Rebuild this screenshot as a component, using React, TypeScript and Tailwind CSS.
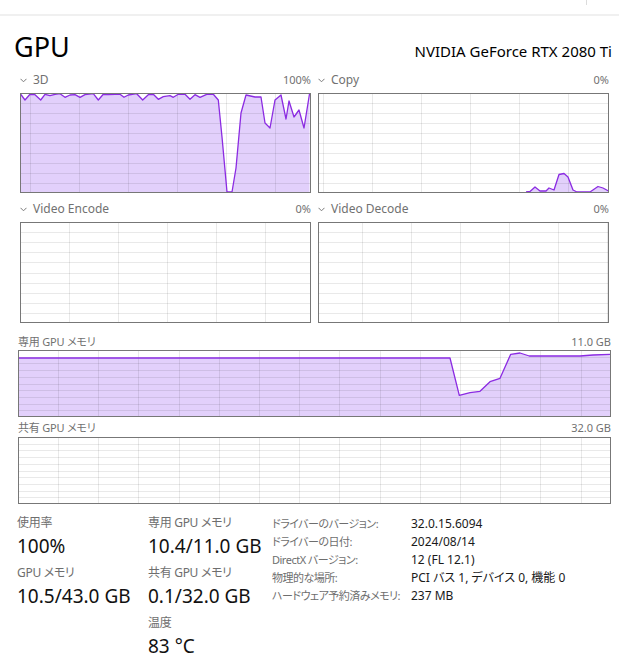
import React from "react";

type Pt = [number, number];

const GRID = "rgba(0,0,0,0.085)";
const LINE = "#8b2be2";
const FILL = "#e2d0fb";

const Chevron = () => (
  <svg width="7" height="5" viewBox="0 0 7 5" className="mr-[6px]">
    <path d="M0.5 0.8 L3.5 3.8 L6.5 0.8" fill="none" stroke="#7a7a7a" strokeWidth="1" />
  </svg>
);

const Graph = ({
  w,
  h,
  ox,
  oy,
  vStart,
  vStep,
  rows = 10,
  points = [],
}: {
  w: number;
  h: number;
  ox: number;
  oy: number;
  vStart: number;
  vStep: number;
  rows?: number;
  points?: Pt[];
}) => {
  const pts = points.map(([x, y]) => [x - ox, y - oy] as Pt);
  const verts: number[] = [];
  for (let x = vStart; x < w - 1; x += vStep) verts.push(Math.round(x) + 0.5);
  const hors: number[] = [];
  for (let k = 1; k < rows; k++) hors.push(Math.round((h * k) / rows) + 0.5);
  const line = pts.map((p) => p.join(",")).join(" ");
  const poly =
    pts.length > 0
      ? `${line} ${pts[pts.length - 1][0]},${h} ${pts[0][0]},${h}`
      : "";
  return (
    <svg width={w} height={h} className="block">
      <rect x="0" y="0" width={w} height={h} fill="#ffffff" />
      {pts.length > 0 && <polygon points={poly} fill={FILL} />}
      {verts.map((x) => (
        <line key={"v" + x} x1={x} y1={0} x2={x} y2={h} stroke={GRID} strokeWidth="1" />
      ))}
      {hors.map((y) => (
        <line key={"h" + y} x1={0} y1={y} x2={w} y2={y} stroke={GRID} strokeWidth="1" />
      ))}
      {pts.length > 0 && (
        <polyline points={line} fill="none" stroke={LINE} strokeWidth="1.3" strokeLinejoin="round" />
      )}
      <rect x="0.5" y="0.5" width={w - 1} height={h - 1} fill="none" stroke="#777777" strokeWidth="1" />
    </svg>
  );
};

const d3: Pt[] = [
  [20.3, 93.7], [25, 100], [30, 94.3], [35, 94.7], [40.7, 100], [45, 94.3], [50, 95.7], [55, 94.3],
  [60, 93.7], [65, 97.3], [70, 95], [75, 94.7], [80, 97.3], [85, 94.7], [93.3, 93.7], [98.3, 100],
  [103.3, 94.3], [108.3, 94.7], [115, 94.3], [120, 94.3], [124, 97.3], [128.3, 95], [136.7, 93.7],
  [142.7, 100], [148.3, 94.7], [153.3, 94.3], [158.3, 99.3], [163.3, 96.7], [170, 95.7], [173.3, 97.3],
  [178.3, 94.3], [185, 94.3], [190, 99.3], [195, 94.7], [200, 97.3], [206.7, 94.3], [213.3, 94.3],
  [218.3, 100], [222, 137], [227, 192], [232, 192], [236, 168], [241, 113], [246, 95], [255, 97],
  [261, 97], [265, 123], [270, 128], [275, 100], [281, 95], [286, 119], [289, 101], [294, 117],
  [299, 110], [304, 128], [309.5, 94],
];

const copy: Pt[] = [
  [526, 192], [530, 191.5], [535, 187], [540, 191], [546, 191], [549, 188], [554, 190], [559, 174.5],
  [564, 173.5], [568, 177], [573, 190], [577, 192], [590, 192], [598, 186.5], [603, 188], [608.5, 191],
];

const dedicated: Pt[] = [
  [18.5, 357], [450, 357], [459.3, 394.3], [470, 391.7], [480, 390.3], [490, 380.7], [500, 377.3],
  [510.7, 353.3], [520, 352], [529.3, 355], [580, 355], [593, 354], [610, 353.3],
];

const Label = ({ name, value, chevron = true }: { name: string; value: string; chevron?: boolean }) => (
  <div className="flex items-center justify-between h-[16px] leading-[16px] text-[#717171]">
    <div className="flex items-center">
      {chevron && <Chevron />}
      <span className={chevron ? "text-[12px]" : "text-[11px] tracking-[-0.2px]"}>{name}</span>
    </div>
    <span className="text-[11px]">{value}</span>
  </div>
);

const Stat = ({ label, value }: { label: string; value: string }) => (
  <div className="h-[50px]">
    <div className="text-[12px] leading-[16px] text-[#6e6e6e] tracking-[-0.3px]">{label}</div>
    <div className="text-[19px] leading-[26px] text-[#111111] mt-[2px]">{value}</div>
  </div>
);

const info: [string, string][] = [
  ["ドライバーのバージョン:", "32.0.15.6094"],
  ["ドライバーの日付:", "2024/08/14"],
  ["DirectX バージョン:", "12 (FL 12.1)"],
  ["物理的な場所:", "PCI バス 1, デバイス 0, 機能 0"],
  ["ハードウェア予約済みメモリ:", "237 MB"],
];

export default function App() {
  return (
    <div className="w-[619px] h-[661px] bg-white overflow-hidden font-['Noto_Sans','Noto_Sans_CJK_JP',sans-serif] [font-feature-settings:'palt']">
      <div className="h-[16px] border-b-2 border-[#f0f0f0] flex justify-end">
        <div className="w-px h-[5px] bg-[#dcdcdc] mr-[32px]" />
      </div>

      <div className="flex items-baseline justify-between pl-[14px] pr-[7px] mt-[14px]">
        <span className="text-[27px] leading-[34px] text-black">GPU</span>
        <span className="text-[15px] leading-[20px] text-black">NVIDIA GeForce RTX 2080 Ti</span>
      </div>

      <div className="pl-[20px] mt-[8px]">
        <div className="grid grid-cols-[291px_291px] gap-x-[7px]">
          <div>
            <Label name="3D" value="100%" />
            <div className="mt-[5px]">
              <Graph w={291} h={100} ox={20} oy={93} vStart={10} vStep={49} points={d3} />
            </div>
          </div>
          <div>
            <Label name="Copy" value="0%" />
            <div className="mt-[5px]">
              <Graph w={291} h={100} ox={318} oy={93} vStart={5} vStep={49} points={copy} />
            </div>
          </div>
          <div className="mt-[8px]">
            <Label name="Video Encode" value="0%" />
            <div className="mt-[5px]">
              <Graph w={291} h={101} ox={20} oy={221} vStart={49} vStep={49} />
            </div>
          </div>
          <div className="mt-[8px]">
            <Label name="Video Decode" value="0%" />
            <div className="mt-[5px]">
              <Graph w={291} h={101} ox={318} oy={221} vStart={44} vStep={49} />
            </div>
          </div>
        </div>
      </div>

      <div className="pl-[18px] w-[611px] mt-[11px]">
        <Label name="専用 GPU メモリ" value="11.0 GB" chevron={false} />
        <Graph w={593} h={67} ox={18} oy={349} vStart={40} vStep={40.2} points={dedicated} />
        <div className="mt-[3px]">
          <Label name="共有 GPU メモリ" value="32.0 GB" chevron={false} />
        </div>
        <div className="mt-[1px]">
          <Graph w={593} h={67} ox={18} oy={436} vStart={40} vStep={40.2} />
        </div>
      </div>

      <div className="flex pl-[17px] mt-[11px]">
        <div className="w-[131px]">
          <Stat label="使用率" value="100%" />
          <Stat label="GPU メモリ" value="10.5/43.0 GB" />
        </div>
        <div className="w-[124px]">
          <Stat label="専用 GPU メモリ" value="10.4/11.0 GB" />
          <Stat label="共有 GPU メモリ" value="0.1/32.0 GB" />
          <Stat label="温度" value="83 °C" />
        </div>
        <div className="grid grid-cols-[139px_auto] auto-rows-[18px] text-[12px] leading-[18px]">
          {info.map(([k, v]) => (
            <React.Fragment key={k}>
              <span className="text-[#6e6e6e] whitespace-nowrap text-[11px] tracking-[-0.5px]">{k}</span>
              <span className="text-[#1a1a1a] whitespace-nowrap">{v}</span>
            </React.Fragment>
          ))}
        </div>
      </div>
    </div>
  );
}
